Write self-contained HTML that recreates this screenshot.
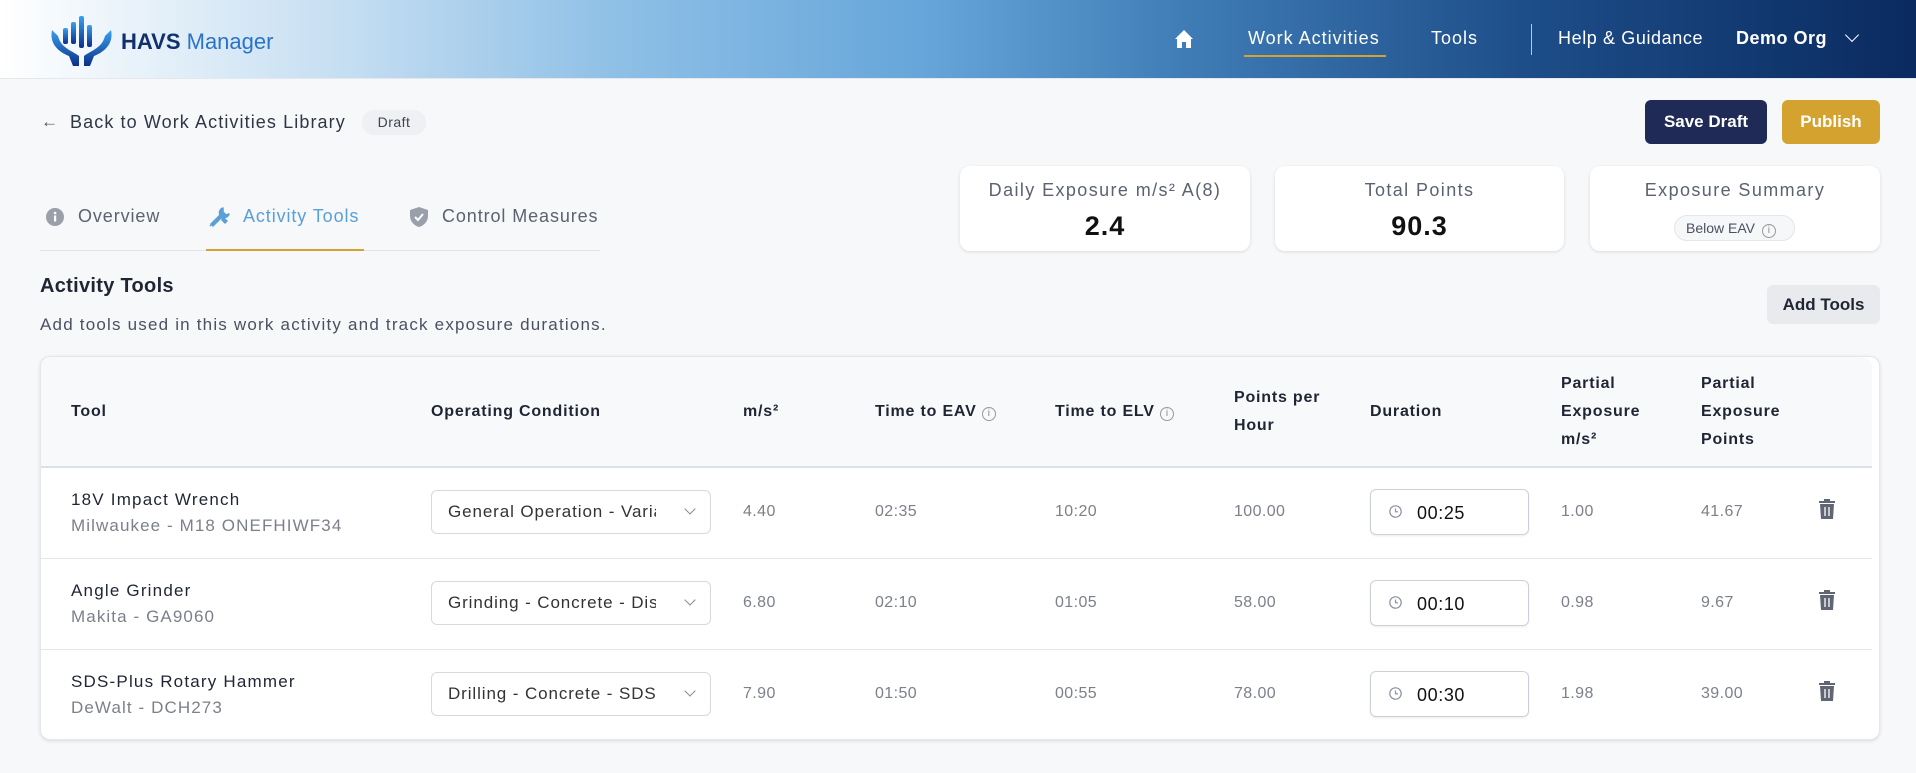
<!DOCTYPE html>
<html><head><meta charset="utf-8"><style>
*{box-sizing:border-box;margin:0;padding:0}
body{width:1916px;height:773px;background:#f7f8fa;font-family:"Liberation Sans",sans-serif;color:#1f2533;position:relative;overflow:hidden}
.a{position:absolute;white-space:nowrap}
.hdr{position:absolute;left:0;top:0;width:1916px;height:79px;background:linear-gradient(90deg,#ffffff 0%,#c5def2 18%,#8fc0e6 32%,#66a6da 48%,#3f7cb6 62%,#1d4d88 80%,#0a2a60 100%);border-bottom:1px solid #e3e7ee}
.nav{color:#fff;font-size:18px;top:28px;letter-spacing:1px}
.card{position:absolute;background:#fff;border-radius:10px;box-shadow:0 1px 3px rgba(0,0,0,.12)}
.lbl{color:#5b6270;font-size:18px;text-align:center;width:100%;top:14px;letter-spacing:1.4px}
.val{font-size:27px;font-weight:bold;text-align:center;width:100%;top:45px;color:#111;letter-spacing:1px}
.th{font-size:16px;font-weight:bold;color:#1f2533;line-height:28px;letter-spacing:0.8px}
.td{font-size:16px;color:#7b808a;letter-spacing:0.4px}
.nm{font-size:17px;color:#1f2533;letter-spacing:1.2px}
.sb{font-size:17px;color:#7b808a;letter-spacing:1.1px}
.sel{position:absolute;width:280px;height:44px;border:1px solid #d6d9df;border-radius:6px;background:#fff;font-size:17px;color:#333;padding:11px 0 0 16px;overflow:hidden;letter-spacing:0.9px}
.sel span{display:block;width:208px;overflow:hidden;white-space:nowrap}
.sel i{position:absolute;right:16px;top:14px;width:8px;height:8px;border-right:1.3px solid #888;border-bottom:1.3px solid #888;transform:rotate(45deg)}
.dur{position:absolute;width:159px;height:46px;border:1px solid #ccd1d9;border-radius:6px;background:#fff;box-shadow:0 1px 2px rgba(0,0,0,.08);font-size:18px;color:#111;padding:13px 0 0 46px;letter-spacing:0.6px}
.dur svg{position:absolute;left:18px;top:15px}
.rowline{position:absolute;left:40px;width:1832px;height:1px;background:#e3e6ea}
.tab{font-size:18px;top:206px;letter-spacing:0.9px}
</style></head><body>
<div class="hdr"></div>
<svg class="a" style="left:49px;top:14px" width="66" height="54" viewBox="0 0 66 54">
<defs><linearGradient id="g" x1="0" y1="0" x2="0" y2="1"><stop offset="0" stop-color="#3aa0f0"/><stop offset="1" stop-color="#0b2f8a"/></linearGradient></defs>
<rect x="14" y="14" width="5" height="16" rx="2" fill="url(#g)"/><rect x="22" y="8" width="5" height="22" rx="2" fill="url(#g)"/><rect x="30" y="2" width="5" height="32" rx="2" fill="url(#g)"/><rect x="38" y="11" width="5" height="22" rx="2" fill="url(#g)"/>
<path d="M3 16 C0 30 10 38 20 42 L24 52 L30 52 L30 42 C22 36 12 34 9 22 Z" fill="url(#g)"/>
<path d="M62 16 C65 30 55 38 45 42 L41 52 L35 52 L35 42 C43 36 53 34 56 22 Z" fill="url(#g)"/>
</svg>
<div class="a" style="left:121px;top:29px;font-size:22px;letter-spacing:0px"><b style="color:#12306b">HAVS</b> <span style="color:#2a74c6">Manager</span></div>
<svg class="a" style="left:1174px;top:29px" width="20" height="20" viewBox="0 0 20 20"><path d="M10 1 L1 10 L3 10 L3 19 L8 19 L8 13 L12 13 L12 19 L17 19 L17 10 L19 10 Z" fill="#fff"/></svg>
<div class="a nav" style="left:1248px">Work Activities</div>
<div class="a" style="left:1244px;top:55px;width:142px;height:2px;background:#d4a22e"></div>
<div class="a nav" style="left:1431px">Tools</div>
<div class="a" style="left:1531px;top:24px;width:1px;height:31px;background:rgba(255,255,255,.7)"></div>
<div class="a nav" style="left:1558px;letter-spacing:0.6px">Help &amp; Guidance</div>
<div class="a nav" style="left:1736px;font-weight:bold;letter-spacing:0.5px">Demo Org</div>
<div class="a" style="left:1847px;top:30px;width:10px;height:10px;border-right:1.5px solid #fff;border-bottom:1.5px solid #fff;transform:rotate(45deg)"></div>

<div class="a" style="left:41px;top:112px;font-size:17px;color:#4a5160">&#8592;</div>
<div class="a" style="left:70px;top:112px;font-size:18px;color:#2f3645;letter-spacing:1.1px">Back to Work Activities Library</div>
<div class="a" style="left:362px;top:110px;width:64px;height:25px;border-radius:12px;background:#eef0f3;font-size:14px;color:#3d4452;text-align:center;line-height:25px;letter-spacing:0.5px">Draft</div>
<div class="a" style="left:1645px;top:100px;width:122px;height:44px;border-radius:6px;background:#1f2a56;color:#fff;font-weight:bold;font-size:17px;text-align:center;line-height:44px">Save Draft</div>
<div class="a" style="left:1782px;top:100px;width:98px;height:44px;border-radius:6px;background:#d4a22e;color:#fff;font-weight:bold;font-size:17px;text-align:center;line-height:44px">Publish</div>

<svg class="a" style="left:45px;top:207px" width="20" height="20"><circle cx="10" cy="10" r="9" fill="#9aa0aa"/><rect x="9" y="8.5" width="2.2" height="6" fill="#fff"/><circle cx="10.1" cy="6" r="1.3" fill="#fff"/></svg>
<div class="a tab" style="left:78px;color:#5b6270">Overview</div>
<svg class="a" style="left:207px;top:205px" width="24" height="24" viewBox="0 0 24 24"><path d="M3 21 L13 11 M16 3 a5 5 0 0 0 -3 7 l-9 9 l2 2 l9 -9 a5 5 0 0 0 7 -3 l-3 1 l-3 -3 Z" fill="#5a9fd6" stroke="#5a9fd6" stroke-width="1.5" stroke-linejoin="round"/><path d="M4 4 l3 1 l8 8 l2 -1 l4 4 l-3 3 l-4 -4 l1 -2 l-8 -8 Z" fill="#5a9fd6"/></svg>
<div class="a tab" style="left:243px;color:#5a9fd6">Activity Tools</div>
<svg class="a" style="left:408px;top:206px" width="22" height="22" viewBox="0 0 22 22"><path d="M11 1 L20 4 L20 10 C20 16 15 20 11 21 C7 20 2 16 2 10 L2 4 Z" fill="#9aa0aa"/><path d="M7 11 L10 14 L15 8" stroke="#fff" stroke-width="2" fill="none"/></svg>
<div class="a tab" style="left:442px;color:#5b6270">Control Measures</div>
<div class="a" style="left:40px;top:250px;width:560px;height:1px;background:#e1e4e8"></div>
<div class="a" style="left:206px;top:249px;width:158px;height:2px;background:#d4a22e"></div>

<div class="card" style="left:960px;top:166px;width:290px;height:85px"><div class="a lbl">Daily Exposure m/s² A(8)</div><div class="a val">2.4</div></div>
<div class="card" style="left:1275px;top:166px;width:289px;height:85px"><div class="a lbl">Total Points</div><div class="a val">90.3</div></div>
<div class="card" style="left:1590px;top:166px;width:290px;height:85px"><div class="a lbl">Exposure Summary</div>
<div class="a" style="left:84px;top:49px;width:121px;height:26px;border:1px solid #e3e6ea;border-radius:13px;background:#f6f7f9;font-size:14px;color:#4a5160;line-height:24px;padding-left:11px">Below EAV <span style="display:inline-block;width:14px;height:14px;border:1px solid #999;border-radius:50%;font-size:10px;text-align:center;line-height:12px;color:#888;margin-left:3px">i</span></div></div>

<div class="a" style="left:40px;top:275px;font-size:20px;font-weight:bold;color:#1f2533;letter-spacing:0.3px">Activity Tools</div>
<div class="a" style="left:40px;top:315px;font-size:17px;color:#4a5160;letter-spacing:1.2px">Add tools used in this work activity and track exposure durations.</div>
<div class="a" style="left:1767px;top:285px;width:113px;height:39px;border-radius:6px;background:#e8eaed;font-size:17px;font-weight:bold;text-align:center;line-height:39px;color:#1f2533">Add Tools</div>

<div class="card" style="left:40px;top:356px;width:1840px;height:384px;border:1px solid #e4e7eb;box-shadow:0 1px 3px rgba(0,0,0,.12)"></div>
<div class="a" style="left:41px;top:357px;width:1831px;height:110px;background:#f8f9fb;border-radius:10px 10px 0 0"></div>
<div class="a" style="left:41px;top:466px;width:1831px;height:2px;background:#dde1e6"></div>
<div class="a th" style="left:71px;top:398px">Tool</div>
<div class="a th" style="left:431px;top:398px">Operating Condition</div>
<div class="a th" style="left:743px;top:398px">m/s²</div>
<div class="a th" style="left:875px;top:398px">Time to EAV <span style="display:inline-block;width:14px;height:14px;border:1px solid #999;border-radius:50%;font-size:10px;font-weight:normal;text-align:center;line-height:12px;color:#888;letter-spacing:0">i</span></div>
<div class="a th" style="left:1055px;top:398px">Time to ELV <span style="display:inline-block;width:14px;height:14px;border:1px solid #999;border-radius:50%;font-size:10px;font-weight:normal;text-align:center;line-height:12px;color:#888;letter-spacing:0">i</span></div>
<div class="a th" style="left:1234px;top:384px">Points per<br>Hour</div>
<div class="a th" style="left:1370px;top:398px">Duration</div>
<div class="a th" style="left:1561px;top:370px">Partial<br>Exposure<br>m/s²</div>
<div class="a th" style="left:1701px;top:370px">Partial<br>Exposure<br>Points</div>

<div class="rowline" style="top:558px"></div>
<div class="rowline" style="top:649px"></div>

<div class="a nm" style="left:71px;top:490px">18V Impact Wrench</div>
<div class="a sb" style="left:71px;top:516px">Milwaukee - M18 ONEFHIWF34</div>
<div class="sel" style="left:431px;top:490px"><span>General Operation - Variable</span><i></i></div>
<div class="a td" style="left:743px;top:503px">4.40</div><div class="a td" style="left:875px;top:503px">02:35</div><div class="a td" style="left:1055px;top:503px">10:20</div><div class="a td" style="left:1234px;top:503px">100.00</div>
<div class="dur" style="left:1370px;top:489px"><svg width="13" height="13"><circle cx="6.5" cy="6.5" r="5.7" fill="none" stroke="#8a90a0" stroke-width="1.2"/><path d="M6.5 3.5V6.8H9" stroke="#8a90a0" fill="none" stroke-width="1.2"/></svg>00:25</div>
<div class="a td" style="left:1561px;top:503px">1.00</div><div class="a td" style="left:1701px;top:503px">41.67</div>

<div class="a nm" style="left:71px;top:581px">Angle Grinder</div>
<div class="a sb" style="left:71px;top:607px">Makita - GA9060</div>
<div class="sel" style="left:431px;top:581px"><span>Grinding - Concrete - Disc</span><i></i></div>
<div class="a td" style="left:743px;top:594px">6.80</div><div class="a td" style="left:875px;top:594px">02:10</div><div class="a td" style="left:1055px;top:594px">01:05</div><div class="a td" style="left:1234px;top:594px">58.00</div>
<div class="dur" style="left:1370px;top:580px"><svg width="13" height="13"><circle cx="6.5" cy="6.5" r="5.7" fill="none" stroke="#8a90a0" stroke-width="1.2"/><path d="M6.5 3.5V6.8H9" stroke="#8a90a0" fill="none" stroke-width="1.2"/></svg>00:10</div>
<div class="a td" style="left:1561px;top:594px">0.98</div><div class="a td" style="left:1701px;top:594px">9.67</div>

<div class="a nm" style="left:71px;top:672px">SDS-Plus Rotary Hammer</div>
<div class="a sb" style="left:71px;top:698px">DeWalt - DCH273</div>
<div class="sel" style="left:431px;top:672px"><span>Drilling - Concrete - SDS</span><i></i></div>
<div class="a td" style="left:743px;top:685px">7.90</div><div class="a td" style="left:875px;top:685px">01:50</div><div class="a td" style="left:1055px;top:685px">00:55</div><div class="a td" style="left:1234px;top:685px">78.00</div>
<div class="dur" style="left:1370px;top:671px"><svg width="13" height="13"><circle cx="6.5" cy="6.5" r="5.7" fill="none" stroke="#8a90a0" stroke-width="1.2"/><path d="M6.5 3.5V6.8H9" stroke="#8a90a0" fill="none" stroke-width="1.2"/></svg>00:30</div>
<div class="a td" style="left:1561px;top:685px">1.98</div><div class="a td" style="left:1701px;top:685px">39.00</div>

<svg class="a" style="left:1818px;top:498px" width="18" height="22" viewBox="0 0 18 22"><path d="M6 1h6v2h5v2H1V3h5z M2 6h14l-1 15H3z" fill="#5f6573"/><path d="M7 9v9M11 9v9" stroke="#fff" stroke-width="1.3"/></svg>
<svg class="a" style="left:1818px;top:589px" width="18" height="22" viewBox="0 0 18 22"><path d="M6 1h6v2h5v2H1V3h5z M2 6h14l-1 15H3z" fill="#5f6573"/><path d="M7 9v9M11 9v9" stroke="#fff" stroke-width="1.3"/></svg>
<svg class="a" style="left:1818px;top:680px" width="18" height="22" viewBox="0 0 18 22"><path d="M6 1h6v2h5v2H1V3h5z M2 6h14l-1 15H3z" fill="#5f6573"/><path d="M7 9v9M11 9v9" stroke="#fff" stroke-width="1.3"/></svg>
</body></html>
